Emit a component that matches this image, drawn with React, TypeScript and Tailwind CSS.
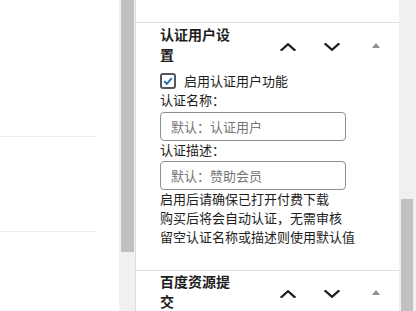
import React from "react";

const FONT = { fontFamily: '"Noto Sans CJK SC", "Noto Sans", sans-serif' };

function ChevronUp() {
  return (
    <svg width="16" height="8" viewBox="0 0 16 8" fill="none">
      <polyline points="1.5,7 8,1.2 14.5,7" stroke="#1e1e1e" strokeWidth="2.2" strokeLinecap="square" />
    </svg>
  );
}

function ChevronDown() {
  return (
    <svg width="16" height="8" viewBox="0 0 16 8" fill="none">
      <polyline points="1.5,1 8,6.8 14.5,1" stroke="#1e1e1e" strokeWidth="2.2" strokeLinecap="square" />
    </svg>
  );
}

function Triangle() {
  return (
    <svg width="8" height="5" viewBox="0 0 8 5">
      <polygon points="0,5 4,0 8,5" fill="#8c8f94" />
    </svg>
  );
}

function SectionHeader({ title }: { title: string }) {
  return (
    <div className="flex items-start pl-6">
      <div className="w-[107px]">
        <h2 className="w-[76px] text-[14px] font-bold leading-[20px] text-[#1e1e1e]">{title}</h2>
      </div>
      <div className="flex h-[40px] w-[44px] items-center justify-center pt-[5px]">
        <ChevronUp />
      </div>
      <div className="flex h-[40px] w-[44px] items-center justify-center pt-[5px]">
        <ChevronDown />
      </div>
      <div className="flex h-[40px] w-[46px] items-center justify-center pt-[3px]">
        <Triangle />
      </div>
    </div>
  );
}

function TextField({ placeholder }: { placeholder: string }) {
  return (
    <div className="flex h-[29px] w-[186px] items-center rounded-[4px] border border-[#8c8f94] bg-white px-[10px]">
      <span className="text-[13px] text-[#757575]">{placeholder}</span>
    </div>
  );
}

export default function App() {
  return (
    <div className="flex h-[311px] w-[416px] overflow-hidden bg-white" style={FONT}>
      {/* left panel */}
      <div className="flex w-[119px] flex-col bg-white">
        <div className="h-[136px]" />
        <div className="h-[95px] w-[96px] border-t border-[#ececec]" />
        <div className="w-[96px] border-t border-[#ececec]" />
      </div>

      {/* left scrollbar */}
      <div className="flex w-[17px] border-r border-[#dcdcde] bg-[#f1f1f1] pl-[2px]">
        <div className="h-[252px] w-[13px] bg-[#c1c1c1]" />
      </div>

      {/* sidebar panel */}
      <div className="flex w-[263px] flex-col bg-white text-[#1e1e1e]">
        <div className="h-[23px]" />
        <div className="border-t border-[#e0e0e0] pt-[1px]">
          <SectionHeader title="认证用户设置" />
          <div className="flex flex-col pl-6 text-[13px] leading-[19px]">
            <label className="mt-[7px] flex h-[19px] items-center gap-2">
              <span className="flex h-4 w-4 items-center justify-center rounded-[3px] border-2 border-[#50575e]">
                <svg width="12" height="12" viewBox="0 0 12 12" fill="none">
                  <polyline points="2.2,6.2 4.8,8.8 9.8,3.2" stroke="#2271b1" strokeWidth="2" />
                </svg>
              </span>
              <span>启用认证用户功能</span>
            </label>
            <div>认证名称：</div>
            <div className="mt-[3px]">
              <TextField placeholder="默认：认证用户" />
            </div>
            <div className="h-[20px] leading-[18px]">认证描述：</div>
            <TextField placeholder="默认：赞助会员" />
            <div className="mt-[-1px]">启用后请确保已打开付费下载</div>
            <div>购买后将会自动认证，无需审核</div>
            <div>留空认证名称或描述则使用默认值</div>
            <div className="h-[24px]" />
          </div>
        </div>
        <div className="border-t border-[#e0e0e0]">
          <SectionHeader title="百度资源提交" />
        </div>
      </div>

      {/* right scrollbar */}
      <div className="flex w-[17px] flex-col bg-[#f0f0f0] pl-[2px]">
        <div className="h-[199px]" />
        <div className="w-[12px] flex-1 bg-[#c1c1c1]" />
      </div>
    </div>
  );
}
